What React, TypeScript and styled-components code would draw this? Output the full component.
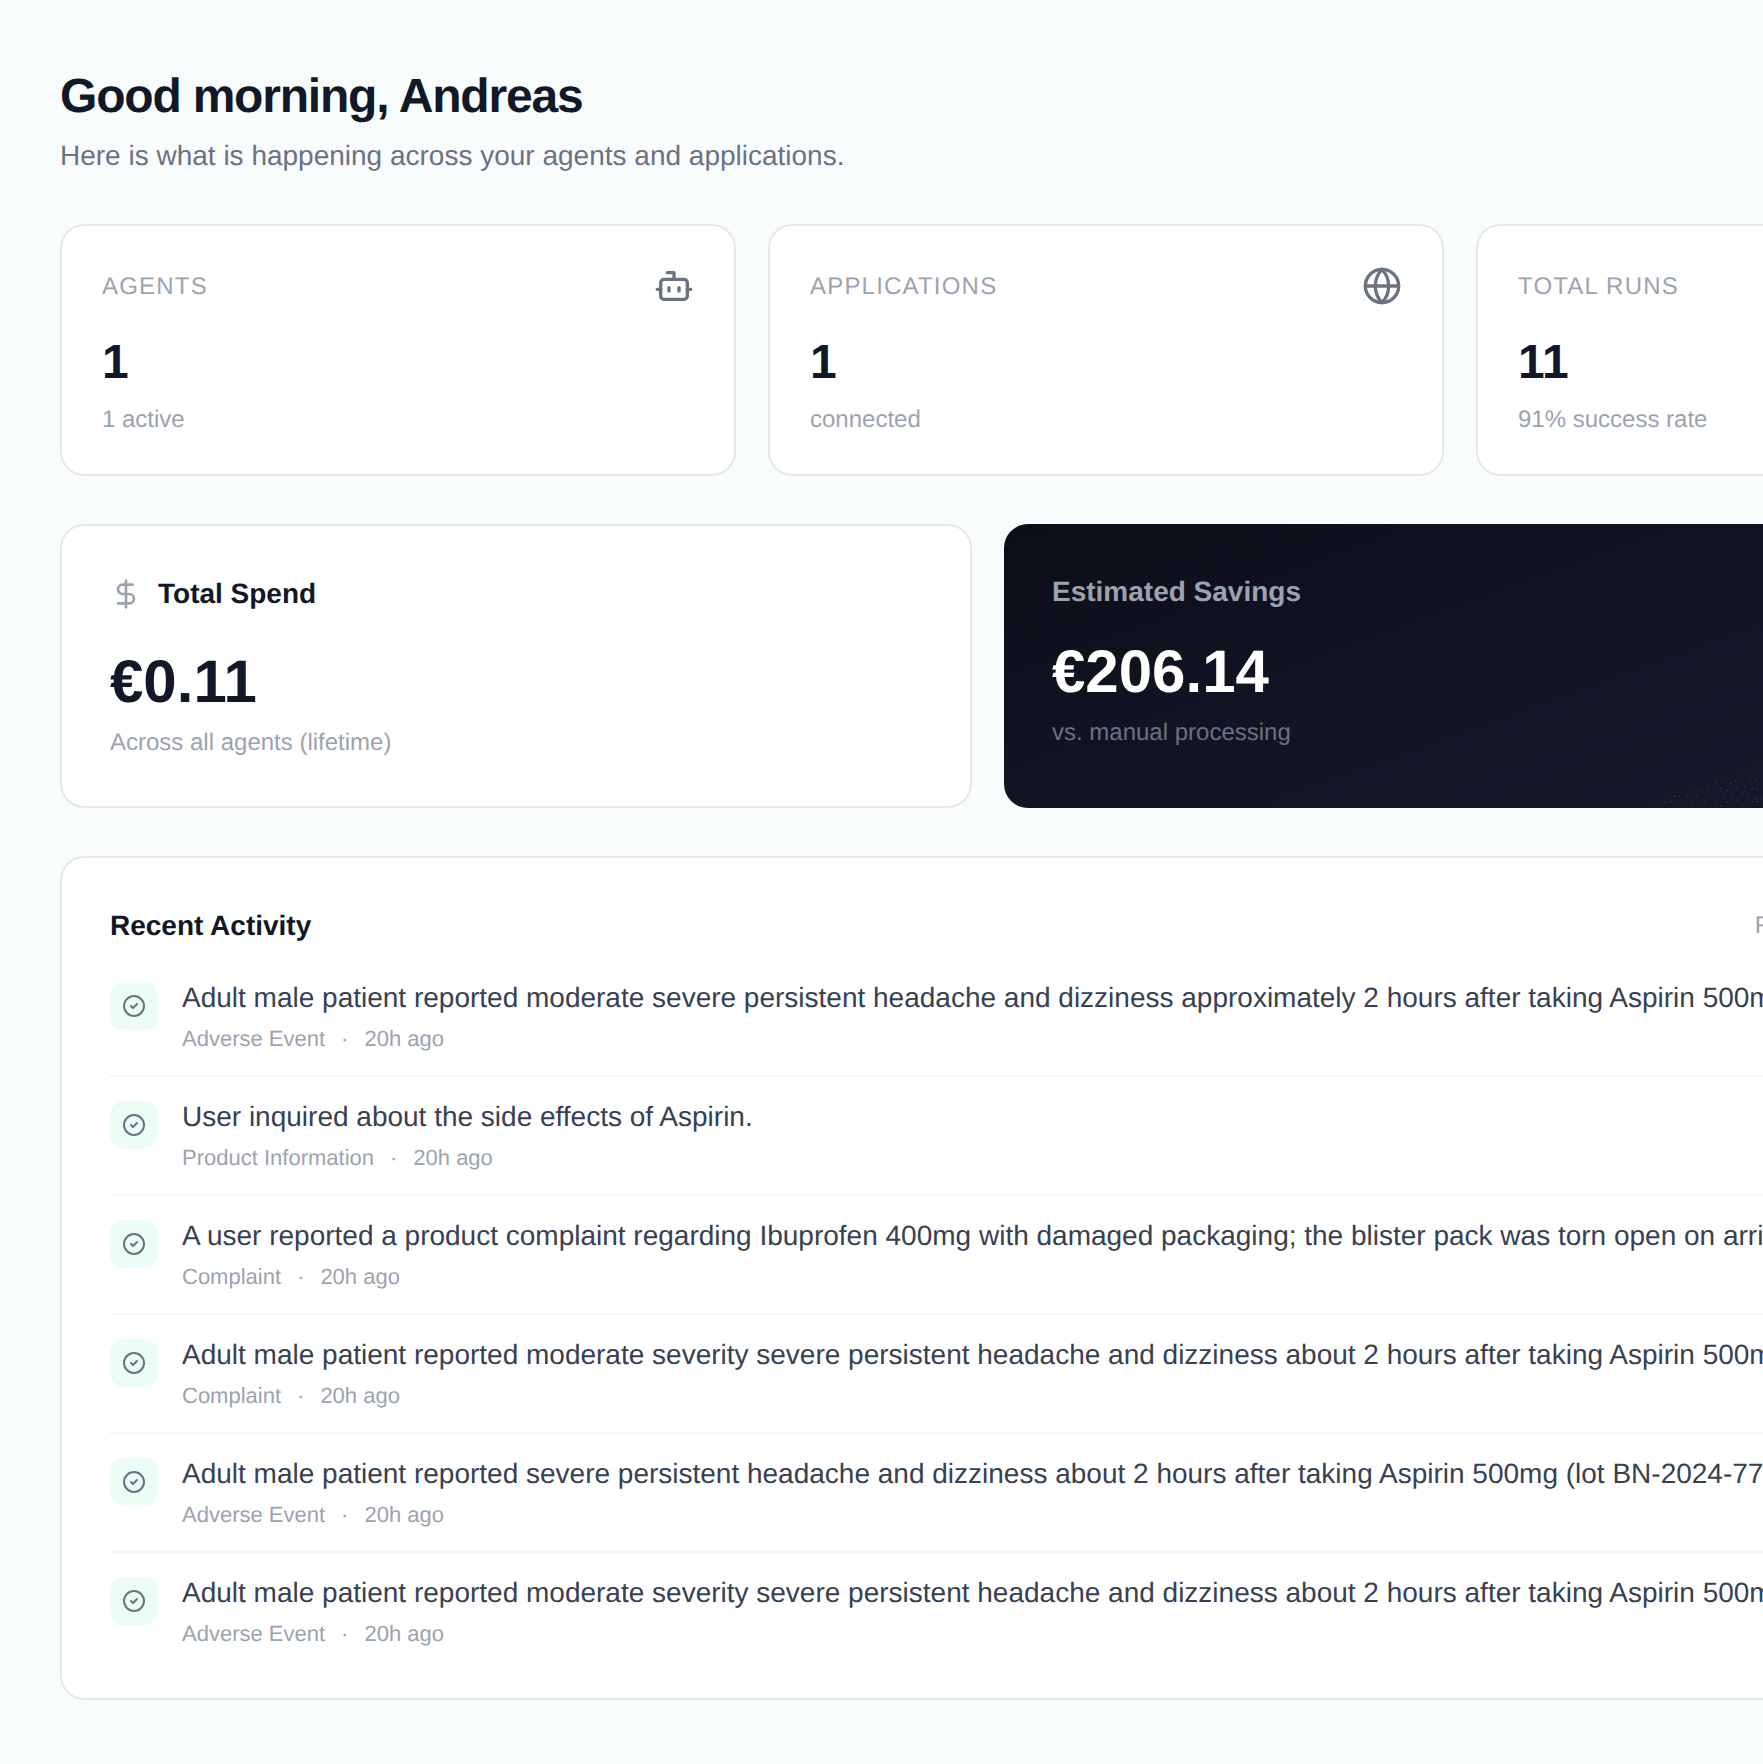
import React from "react";
import styled, { createGlobalStyle } from "styled-components";
import { Bot, CircleCheck, DollarSign, Globe } from "lucide-react";

const GlobalStyle = createGlobalStyle`
  html, body {
    margin: 0;
    height: 100%;
    overflow: hidden;
    background: #f9fcfd;
  }
  body {
    font-family: "Liberation Sans", Arial, sans-serif;
    text-rendering: geometricPrecision;
  }
`;

const SRoot = styled.main`
  box-sizing: border-box;
  width: 2920px;
  padding: 64px 60px 60px;
`;

const SHeader = styled.header`
  margin-bottom: 48px;
`;

const STitle = styled.h1`
  margin: 0;
  font-size: 48px;
  line-height: 66px;
  font-weight: 700;
  letter-spacing: -1.2px;
  color: #111827;
`;

const SSubtitle = styled.p`
  margin: 6px 0 0;
  font-size: 28px;
  line-height: 40px;
  color: #6b7280;
`;

const SStatGrid = styled.section`
  display: grid;
  grid-template-columns: repeat(4, 1fr);
  gap: 32px;
  margin-bottom: 48px;
`;

const SCard = styled.div`
  box-sizing: border-box;
  background: #fff;
  border: 2px solid #e5e7eb;
  border-radius: 24px;
`;

const SStatCard = styled(SCard)`
  height: 252px;
  padding: 40px;
`;

const SStatTop = styled.div`
  display: flex;
  align-items: center;
  justify-content: space-between;
  height: 40px;
  color: #6b7280;
`;

const SStatLabel = styled.span`
  padding-top: 2px;
  font-size: 24px;
  letter-spacing: 1.2px;
  color: #9ca3af;
`;

const SStatValue = styled.div`
  margin-top: 31px;
  font-size: 48px;
  line-height: 52px;
  font-weight: 700;
  color: #111827;
`;

const SStatNote = styled.div`
  margin-top: 15px;
  font-size: 24px;
  line-height: 32px;
  color: #9ca3af;
`;

const SMoneyGrid = styled.section`
  display: grid;
  grid-template-columns: repeat(3, 1fr);
  gap: 32px;
  margin-bottom: 48px;
`;

const SSpendCard = styled(SCard)`
  height: 284px;
  padding: 48px;
`;

const SSpendTop = styled.div`
  display: flex;
  align-items: center;
  gap: 16px;
  height: 40px;
  color: #9ca3af;
`;

const SSpendTitle = styled.span`
  font-size: 28px;
  font-weight: 700;
  color: #111827;
`;

const SMoneyValue = styled.div<{ $light?: boolean }>`
  margin-top: ${(p) => (p.$light ? 30 : 38)}px;
  font-size: 60px;
  line-height: 60px;
  font-weight: 700;
  color: ${(p) => (p.$light ? "#fff" : "#111827")};
`;

const SMoneyNote = styled.div<{ $light?: boolean }>`
  margin-top: 15px;
  font-size: 24px;
  line-height: 32px;
  color: ${(p) => (p.$light ? "#6b7280" : "#9ca3af")};
`;

const SSavingsCard = styled.div`
  position: relative;
  grid-column: span 2;
  box-sizing: border-box;
  height: 284px;
  padding: 48px;
  border-radius: 24px;
  background: linear-gradient(160deg, #0c0e18 0%, #111423 30%, #151929 60%, #1b2034 100%);
`;

const SSavingsTitle = styled.div`
  font-size: 28px;
  line-height: 40px;
  font-weight: 700;
  color: #9ca3af;
`;

const SSavingsDots = styled.svg`
  position: absolute;
  left: 556px;
  top: 216px;
`;

const SActivityCard = styled(SCard)`
  width: 1856px;
  padding: 48px 48px 49px;
`;

const SActivityTop = styled.div`
  display: flex;
  align-items: center;
  justify-content: space-between;
  height: 40px;
  margin-bottom: 32px;
`;

const SActivityTitle = styled.h2`
  margin: 0;
  font-size: 28px;
  line-height: 40px;
  font-weight: 700;
  color: #111827;
`;

const SActivityLink = styled.span`
  font-size: 24px;
  letter-spacing: 0.3px;
  color: #9ca3af;
`;

const SRow = styled.div`
  display: flex;
  align-items: flex-start;
  gap: 24px;
  padding: 20px 0 21px;
  border-bottom: 2px solid #f3f7f7;

  &:first-child {
    padding-top: 0;
  }

  &:last-child {
    padding-bottom: 0;
    border-bottom: 0;
  }
`;

const SRowIcon = styled.div`
  flex: none;
  display: flex;
  align-items: center;
  justify-content: center;
  width: 48px;
  height: 48px;
  margin-top: 4px;
  border-radius: 14px;
  background: #ecfdf5;
  color: #6b7280;
`;

const SRowBody = styled.div`
  flex: 1;
  min-width: 0;
`;

const SRowText = styled.div`
  overflow: hidden;
  white-space: nowrap;
  text-overflow: ellipsis;
  font-size: 28px;
  line-height: 40px;
  color: #374151;
`;

const SRowMeta = styled.div`
  display: flex;
  gap: 16px;
  margin-top: 6px;
  font-size: 22px;
  line-height: 30px;
  color: #9ca3af;
`;

const stats = [
  { label: "AGENTS", value: "1", note: "1 active", icon: <Bot size={40} /> },
  { label: "APPLICATIONS", value: "1", note: "connected", icon: <Globe size={40} /> },
  { label: "TOTAL RUNS", value: "11", note: "91% success rate", icon: null },
  { label: "TOTAL COST", value: "€0.11", note: "lifetime", icon: null },
];

const activity = [
  {
    text: "Adult male patient reported moderate severe persistent headache and dizziness approximately 2 hours after taking Aspirin 500mg, with symptoms ongoing at time of report.",
    type: "Adverse Event",
  },
  { text: "User inquired about the side effects of Aspirin.", type: "Product Information" },
  {
    text: "A user reported a product complaint regarding Ibuprofen 400mg with damaged packaging; the blister pack was torn open on arrival at the pharmacy.",
    type: "Complaint",
  },
  {
    text: "Adult male patient reported moderate severity severe persistent headache and dizziness about 2 hours after taking Aspirin 500mg, ongoing at time of report.",
    type: "Complaint",
  },
  {
    text: "Adult male patient reported severe persistent headache and dizziness about 2 hours after taking Aspirin 500mg (lot BN-2024-7731), ongoing at time of report.",
    type: "Adverse Event",
  },
  {
    text: "Adult male patient reported moderate severity severe persistent headache and dizziness about 2 hours after taking Aspirin 500mg, ongoing at time of report.",
    type: "Adverse Event",
  },
];

// particles in the lower part of the savings card
const dots = [
  [93, 64], [98, 64], [104, 62], [110, 61], [114, 56], [119, 56], [127, 56], [132, 61],
  [136, 56], [141, 51], [144, 61], [147, 49], [149, 57], [153, 49], [155, 42], [155, 61],
  [157, 54], [160, 65], [161, 48], [163, 57], [167, 50], [167, 62], [170, 43], [172, 54],
  [175, 40], [176, 48], [177, 60], [181, 40], [182, 53], [184, 46], [186, 61], [188, 53],
  [190, 41], [192, 48], [192, 61], [195, 59], [196, 40], [197, 49], [197, 61], [200, 58],
];

const App = () => {
  return (
    <SRoot>
      <GlobalStyle />
      <SHeader>
        <STitle>Good morning, Andreas</STitle>
        <SSubtitle>Here is what is happening across your agents and applications.</SSubtitle>
      </SHeader>

      <SStatGrid>
        {stats.map((s) => (
          <SStatCard key={s.label}>
            <SStatTop>
              <SStatLabel>{s.label}</SStatLabel>
              {s.icon}
            </SStatTop>
            <SStatValue>{s.value}</SStatValue>
            <SStatNote>{s.note}</SStatNote>
          </SStatCard>
        ))}
      </SStatGrid>

      <SMoneyGrid>
        <SSpendCard>
          <SSpendTop>
            <DollarSign size={32} />
            <SSpendTitle>Total Spend</SSpendTitle>
          </SSpendTop>
          <SMoneyValue>€0.11</SMoneyValue>
          <SMoneyNote>Across all agents (lifetime)</SMoneyNote>
        </SSpendCard>
        <SSavingsCard>
          <SSavingsTitle>Estimated Savings</SSavingsTitle>
          <SMoneyValue $light>€206.14</SMoneyValue>
          <SMoneyNote $light>vs. manual processing</SMoneyNote>
          <SSavingsDots width="204" height="68" viewBox="0 0 204 68">
            {dots.map(([x, y]) => (
              <rect key={`${x}-${y}`} x={x} y={y} width="1" height="1" fill="#3f4454" />
            ))}
          </SSavingsDots>
        </SSavingsCard>
      </SMoneyGrid>

      <SActivityCard>
        <SActivityTop>
          <SActivityTitle>Recent Activity</SActivityTitle>
          <SActivityLink>Full report</SActivityLink>
        </SActivityTop>
        <div>
          {activity.map((a, i) => (
            <SRow key={i}>
              <SRowIcon>
                <CircleCheck size={24} />
              </SRowIcon>
              <SRowBody>
                <SRowText>{a.text}</SRowText>
                <SRowMeta>
                  <span>{a.type}</span>
                  <span>·</span>
                  <span>20h ago</span>
                </SRowMeta>
              </SRowBody>
            </SRow>
          ))}
        </div>
      </SActivityCard>
    </SRoot>
  );
};

export default App;
